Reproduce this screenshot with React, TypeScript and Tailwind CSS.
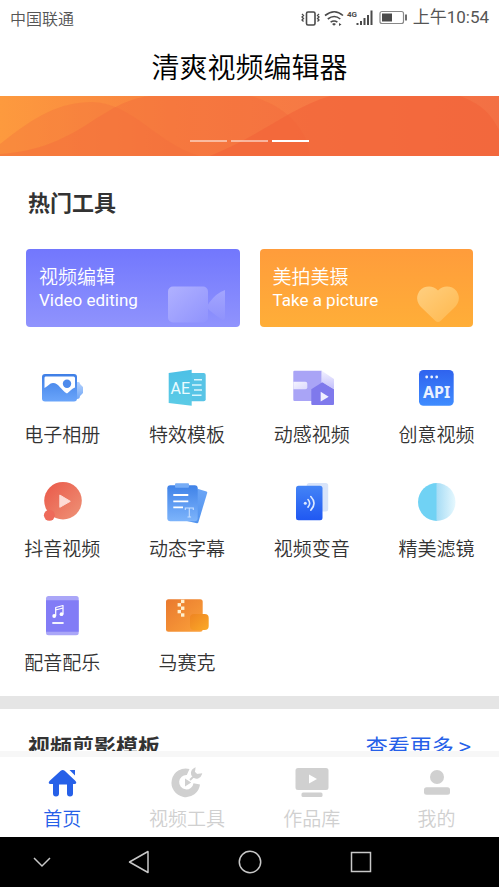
import type { ReactNode } from 'react';

function Gradient({ id, from, to, diagonal = false }: { id: string; from: string; to: string; diagonal?: boolean }) {
  return (
    <linearGradient id={id} x1="0" y1="0" x2={diagonal ? '1' : '0'} y2="1">
      <stop offset="0" stopColor={from} />
      <stop offset="1" stopColor={to} />
    </linearGradient>
  );
}

const tools: { label: string; icon: ReactNode }[] = [
  {
    label: '电子相册',
    icon: (
      <>
        <defs>
          <Gradient id="album" from="#3f7fe6" to="#6aa5fa" />
          <Gradient id="albumBack" from="#b5d2fd" to="#6fa6f6" />
        </defs>
        <path d="M37 18h3.500q1.500 0 1.500 2l3 3v6l-3 3q0 3-3 3H29V18Z" fill="url(#albumBack)" />
        <rect x="4" y="10" width="35" height="27.500" rx="3" fill="url(#album)" />
        <path d="M7.500 12.500h28a1.500 1.500 0 0 1 1.500 1.500v9.500c-3 1-5 3.500-8 6-6-3-8-10.500-14-10.500-3.500 0-5 3.500-8.500 5V14a1.500 1.500 0 0 1 1-1.500Z" fill="#fff" />
        <circle cx="29" cy="19.700" r="4.200" fill="#4c8aec" />
      </>
    ),
  },
  {
    label: '特效模板',
    icon: (
      <>
        <defs>
          <Gradient id="ae" from="#4cc0e6" to="#5ccbe6" />
        </defs>
        <rect x="24" y="9" width="18.700" height="28.300" rx="2" fill="#58c4e6" />
        <path d="M31 15.700h8M29 21h9.500M31 26h8M29 31.300h9.500" stroke="#d8f5fd" strokeWidth="1.500" />
        <path d="m5.700 9 23-3.300v36L5.700 39Z" fill="url(#ae)" />
        <text x="7.500" y="29.500" fill="#e9fbff" className="font-['Roboto',sans-serif] text-[16px]">AE</text>
      </>
    ),
  },
  {
    label: '动感视频',
    icon: (
      <>
        <defs>
          <Gradient id="notch" from="#f5f4ff" to="#dcdafd" diagonal />
          <Gradient id="fold" from="#f2f1ff" to="#c4c0fb" />
        </defs>
        <path d="M6.500 6.700h27.200V37H6.500a1.200 1.200 0 0 1-1.200-1.200V8a1.200 1.200 0 0 1 1.200-1.300Z" fill="#a9a4f6" />
        <path d="M5.300 17.700h12a2 2 0 0 1 2 2v3.600a2 2 0 0 1-2 2h-12Z" fill="url(#notch)" />
        <path d="M33.700 6.700 46 15v10l-12.300-7Z" fill="url(#fold)" />
        <path d="m23.300 25.300 11-7 11.700 7V40a1 1 0 0 1-1 1H24.300a1 1 0 0 1-1-1Z" fill="#7f79ec" />
        <path d="m32.700 27.700 8 5-8 4.800Z" fill="#f0efff" />
      </>
    ),
  },
  {
    label: '创意视频',
    icon: (
      <>
        <defs>
          <Gradient id="api" from="#2f63ee" to="#3f8cff" />
        </defs>
        <rect x="6" y="6" width="34.700" height="35.700" rx="4.500" fill="url(#api)" />
        <g fill="#eaf2ff">
          <circle cx="13.700" cy="13" r="1.400" />
          <circle cx="18.700" cy="13" r="1.400" />
          <circle cx="23.700" cy="13" r="1.400" />
          <text x="10" y="34" className="font-['Noto_Sans',sans-serif] text-[16px] font-bold">API</text>
        </g>
      </>
    ),
  },
  {
    label: '抖音视频',
    icon: (
      <>
        <defs>
          <Gradient id="douyin" from="#ea5748" to="#ee9478" diagonal />
        </defs>
        <circle cx="25" cy="22.700" r="18.800" fill="url(#douyin)" />
        <circle cx="11.400" cy="37.300" r="5.500" fill="#ee6a5a" />
        <path d="m21.800 17 10.500 6.300-10.500 6Z" fill="#fddcd6" stroke="#fddcd6" strokeLinejoin="round" />
      </>
    ),
  },
  {
    label: '动态字幕',
    icon: (
      <>
        <defs>
          <Gradient id="sheet" from="#3f82e8" to="#7db4fb" />
          <Gradient id="sheetBack" from="#6ba5f6" to="#5193ee" />
        </defs>
        <path d="m34.500 10.700 9 2.800q1 .4.700 1.400L35.300 44.500q-.4 1-1.400.8L24 43Z" fill="url(#sheetBack)" />
        <rect x="4.300" y="7.300" width="30.400" height="36" rx="3" fill="url(#sheet)" />
        <rect x="12" y="5.300" width="14" height="4.500" rx="1" fill="#76acf6" />
        <path d="M10.300 17h15M10.300 23.300h15M10.300 29.300H20" stroke="#fff" strokeWidth="1.800" />
        <path d="M22.300 32v-2h8v2M26.300 30v9M24.500 39h3.600" stroke="#c8e0ff" strokeWidth="1.100" fill="none" />
      </>
    ),
  },
  {
    label: '视频变音',
    icon: (
      <>
        <defs>
          <Gradient id="voice" from="#4484f6" to="#2058f2" />
        </defs>
        <rect x="18.700" y="5" width="21.500" height="28.500" rx="2.500" fill="#d8e4fa" />
        <rect x="8" y="7.700" width="26.500" height="34.500" rx="2.500" fill="url(#voice)" />
        <circle cx="17.300" cy="25.300" r="1.500" fill="#dce9ff" />
        <path d="M20 21.500q3.400 3.800 0 7.600M22.800 18.500q6.400 6.800 0 13.600" stroke="#dce9ff" strokeWidth="1.600" fill="none" strokeLinecap="round" />
      </>
    ),
  },
  {
    label: '精美滤镜',
    icon: (
      <>
        <defs>
          <linearGradient id="filter">
            <stop offset="0" stopColor="#a6dcf5" />
            <stop offset="1" stopColor="#e6f8fe" />
          </linearGradient>
        </defs>
        <path d="M24 5a19 19 0 0 0 0 38Z" fill="#70d2f4" />
        <path d="M23.500 5a19 19 0 0 1 0 38Z" fill="url(#filter)" />
      </>
    ),
  },
  {
    label: '配音配乐',
    icon: (
      <>
        <rect x="8" y="4" width="32.700" height="39.300" rx="2.500" fill="#aaa6f8" />
        <path d="M8 8.300h32.700v31.400H8Z" fill="#827cf6" />
        <path d="M17.700 24v-8.500l7.300-2v8.500M17.700 18l7.300-2" stroke="#fff" strokeWidth="1.200" fill="none" strokeLinejoin="round" />
        <circle cx="16.200" cy="24" r="1.900" fill="#fff" />
        <circle cx="23.500" cy="22.200" r="1.900" fill="#fff" />
        <path d="M14.300 31h11.300" stroke="#fff" strokeWidth="1.800" />
      </>
    ),
  },
  {
    label: '马赛克',
    icon: (
      <>
        <defs>
          <Gradient id="mosaic" from="#e9792f" to="#fba23a" diagonal />
          <Gradient id="mosaicSmall" from="#ee8422" to="#fbaa28" diagonal />
        </defs>
        <rect x="3" y="7.300" width="36.700" height="32.400" rx="2.500" fill="url(#mosaic)" />
        <rect x="27" y="22" width="18.700" height="16" rx="4" fill="url(#mosaicSmall)" />
        <g fill="#fff0cf">
          <rect x="18" y="7.700" width="3.400" height="3.400" />
          <rect x="14.600" y="11.100" width="3.400" height="3.400" />
          <rect x="18" y="14.500" width="3.400" height="3.400" />
          <rect x="14.600" y="17.900" width="3.400" height="3.400" />
          <rect x="18" y="21.300" width="3.400" height="3.400" />
        </g>
      </>
    ),
  },
];

const tabs: { label: string; icon: ReactNode }[] = [
  {
    label: '首页',
    icon: (
      <>
        <path d="M3.500 16 14.700 5.800q2-1.600 4 0L29.500 16q2 2.500-1 3H27v9.500a3 3 0 0 1-6 0V19.500h-8v9a3 3 0 0 1-6 0V19H4.500q-3-.5-1-3Z" />
        <path d="M23.500 5H29v5.500Z" />
      </>
    ),
  },
  {
    label: '视频工具',
    icon: (
      <>
        <path d="M18.500 4A14.300 14.300 0 1 0 29 19.500l-6.500-1.300a7.200 7.200 0 1 1-6.700-8.200Z" />
        <path d="M14 13.500v8l6.200-4Z" />
        <path d="m19 15 5-5M23.500 3.800a4.700 4.700 0 1 0 6.500 5.500l-4.200.7-2.800-2.800Z" stroke="currentColor" strokeWidth="1.800" />
      </>
    ),
  },
  {
    label: '作品库',
    icon: (
      <>
        <path fillRule="evenodd" d="M2 3h28a2.500 2.500 0 0 1 2.500 2.500v17A2.500 2.500 0 0 1 30 25H2a2.500 2.500 0 0 1-2.500-2.500v-17A2.500 2.500 0 0 1 2 3Zm11 6.500v9l8-4.500Z" />
        <rect x="5.500" y="27.500" width="21" height="4.500" rx="1.500" />
      </>
    ),
  },
  {
    label: '我的',
    icon: (
      <>
        <circle cx="16" cy="12" r="7" />
        <rect x="3" y="22.300" width="26" height="7.400" rx="2.500" />
      </>
    ),
  },
];

function StatusBar() {
  return (
    <header className="flex h-[35px] shrink-0 items-center justify-between px-[10px] text-[#555]">
      <span className="text-base font-[350]">中国联通</span>
      <div className="flex items-center gap-[6px]">
        <svg width="106" height="20" viewBox="0 0 106 20" fill="none" stroke="#4a4a4a" aria-hidden="true">
          <rect x="5.500" y="4" width="8.500" height="13" rx="1.500" strokeWidth="1.600" />
          <path d="m1 6 1.500 1.500L1 9l1.500 1.500L1 12l1.500 1.500M18 6l-1.500 1.500L18 9l-1.500 1.500L18 12l-1.500 1.500" strokeWidth="1.300" />
          <path d="M24 7.500q9.500-7.500 18 0M26.800 11q6.500-5 12.500 0M29.600 14.200q3.500-2.500 6.800 0" strokeWidth="1.600" />
          <path d="m31 16 2-1 2 1-2 1.700ZM38 15l2.500 1.500L38 18Z" fill="#4a4a4a" stroke="none" />
          <text x="46" y="9" fill="#4a4a4a" stroke="none" className="font-['Roboto',sans-serif] text-[8px] font-bold">4G</text>
          <path d="M56.500 17v-2M60 17v-4M63.500 17v-7M67 17V7M70.500 17V2.500" strokeWidth="2" />
          <rect x="79" y="3.500" width="23.500" height="12" rx="2" stroke="#888" strokeWidth="1.200" />
          <path d="M81 5.500h10v8H81Z" fill="#4a4a4a" stroke="none" />
          <path d="M105 6.500v6" strokeWidth="1.600" />
        </svg>
        <span className="font-['Roboto','Noto_Sans_CJK_SC',sans-serif] text-[17px]">上午10:54</span>
      </div>
    </header>
  );
}

function Banner() {
  return (
    <section className="relative h-[60px] shrink-0" aria-label="轮播">
      <svg className="h-full w-full" viewBox="0 0 499 60" preserveAspectRatio="none" aria-hidden="true">
        <defs>
          <linearGradient id="banner">
            <stop offset="0" stopColor="#fd9a3e" />
            <stop offset="0.350" stopColor="#f88240" />
            <stop offset="0.650" stopColor="#f67845" />
            <stop offset="1" stopColor="#f37044" />
          </linearGradient>
        </defs>
        <path d="M0 0h499v60H0Z" fill="url(#banner)" />
        <path d="M0 48C35 20 60 6 92 6c40 0 68 44 108 54H0Z" fill="#f26a3c" opacity=".3" />
        <path d="M0 58c80-5 100-53 150-58h100c40 10 60 40 60 60H0Z" fill="#f26a3c" opacity=".4" />
        <path d="M210 60C260 40 290 12 330 0h130c20 8 30 16 39 34v26Z" fill="#f26338" opacity=".6" />
      </svg>
      <div className="absolute inset-x-0 bottom-[14px] flex justify-center gap-1">
        <span className="h-0.5 w-[37px] bg-white/50" />
        <span className="h-0.5 w-[37px] bg-white/50" />
        <span className="h-0.5 w-[37px] bg-white" />
      </div>
    </section>
  );
}

function FeatureCard({ title, subtitle, tone, children }: { title: string; subtitle: string; tone: string; children: ReactNode }) {
  return (
    <button type="button" className={`flex h-[78px] items-end justify-between rounded pl-[13px] pr-[14px] text-left text-white ${tone}`}>
      <span className="flex flex-col self-center pb-1">
        <span className="text-[19px] font-[350] leading-7">{title}</span>
        <span className="font-['Roboto',sans-serif] text-[17px] leading-5">{subtitle}</span>
      </span>
      {children}
    </button>
  );
}

export default function App() {
  return (
    <div className="flex h-screen flex-col overflow-hidden bg-white font-['Noto_Sans_CJK_SC',sans-serif] text-[#333]">
      <StatusBar />
      <h1 className="flex h-[61px] shrink-0 items-center justify-center text-[28px] font-[350] text-black">清爽视频编辑器</h1>
      <main className="flex min-h-0 flex-1 flex-col overflow-hidden">
        <Banner />
        <section className="shrink-0">
          <h2 className="px-7 pb-8 pt-[30px] text-[22px] font-bold leading-[31px]">热门工具</h2>
          <div className="grid grid-cols-2 gap-5 px-[26px]">
            <FeatureCard title="视频编辑" subtitle="Video editing" tone="bg-linear-to-b from-[#7277fd] to-[#9093fd]">
              <svg className="mb-1" width="58" height="37" viewBox="0 0 58 37" aria-hidden="true">
                <defs>
                  <Gradient id="camera" from="#b0b1ff" to="#9093fd" diagonal />
                  <Gradient id="lens" from="#a3a5fe" to="#8f92fc" />
                </defs>
                <rect y="0.500" width="40" height="36" rx="5" fill="url(#camera)" />
                <path d="M57 4v28q0 3-3 2L41 24q-3-3 0-7Q48 7 57 4Z" fill="url(#lens)" />
              </svg>
            </FeatureCard>
            <FeatureCard title="美拍美摄" subtitle="Take a picture" tone="bg-linear-to-b from-[#ff9c3b] to-[#ffae38]">
              <svg className="mb-1" width="42" height="37" viewBox="0 0 42 37" aria-hidden="true">
                <defs>
                  <Gradient id="heart" from="#ffcf80" to="#ffb84d" diagonal />
                </defs>
                <path d="M21 4.500C26-1 35-.5 39.500 5c4.500 7 2 13-2.500 17L23.500 35q-2.500 2-5 0L5 22C.5 18-2 12 2.500 5 7-.5 16-1 21 4.500Z" fill="url(#heart)" />
              </svg>
            </FeatureCard>
          </div>
          <div className="grid grid-cols-4 gap-y-4 pb-[6px] pt-[37px]">
            {tools.map((tool) => (
              <button type="button" key={tool.label} className="flex h-[98px] flex-col items-center gap-2">
                <svg width="48" height="48" viewBox="0 0 48 48" aria-hidden="true">
                  {tool.icon}
                </svg>
                <span className="text-[19px] font-[350] leading-7">{tool.label}</span>
              </button>
            ))}
          </div>
        </section>
        <div className="h-[13px] shrink-0 bg-[#e5e5e5]" />
        <section className="flex shrink-0 items-center justify-between px-7 pt-5 text-[22px] leading-8">
          <h2 className="font-bold">视频剪影模板</h2>
          <a href="#templates" className="text-[#2660e8]">查看更多 &gt;</a>
        </section>
      </main>
      <nav className="grid h-[86px] shrink-0 grid-cols-4 border-t-[6px] border-[#f7f7f7]" aria-label="主导航">
        {tabs.map((tab, index) => (
          <button
            type="button"
            key={tab.label}
            aria-current={index === 0 ? 'page' : undefined}
            className={`flex flex-col items-center gap-[5px] pt-2 ${index === 0 ? 'text-[#2660e8]' : 'text-[#d0d0d0]'}`}
          >
            <svg className="overflow-visible" width="32" height="34" viewBox="0 0 32 34" fill="currentColor" aria-hidden="true">
              {tab.icon}
            </svg>
            <span className="text-[19px] font-[350] leading-7">{tab.label}</span>
          </button>
        ))}
      </nav>
      <footer className="grid h-[50px] shrink-0 grid-cols-[83px_111px_111px_111px] items-center justify-items-center bg-black text-[#c8c8c8]">
        <button type="button" aria-label="收起">
          <svg width="24" height="24" viewBox="0 0 24 24" fill="none" stroke="currentColor" strokeWidth="1.500"><path d="m4 8 8 8 8-8" /></svg>
        </button>
        <button type="button" aria-label="返回">
          <svg width="24" height="24" viewBox="0 0 24 24" fill="none" stroke="currentColor" strokeWidth="1.500" strokeLinejoin="round"><path d="M21 1.500v21L2.500 12Z" /></svg>
        </button>
        <button type="button" aria-label="主屏幕">
          <svg width="24" height="24" viewBox="0 0 24 24" fill="none" stroke="currentColor" strokeWidth="1.500"><circle cx="12" cy="12" r="10.700" /></svg>
        </button>
        <button type="button" aria-label="最近任务">
          <svg width="24" height="24" viewBox="0 0 24 24" fill="none" stroke="currentColor" strokeWidth="1.500"><rect x="2.500" y="2.500" width="19" height="19" /></svg>
        </button>
      </footer>
    </div>
  );
}
